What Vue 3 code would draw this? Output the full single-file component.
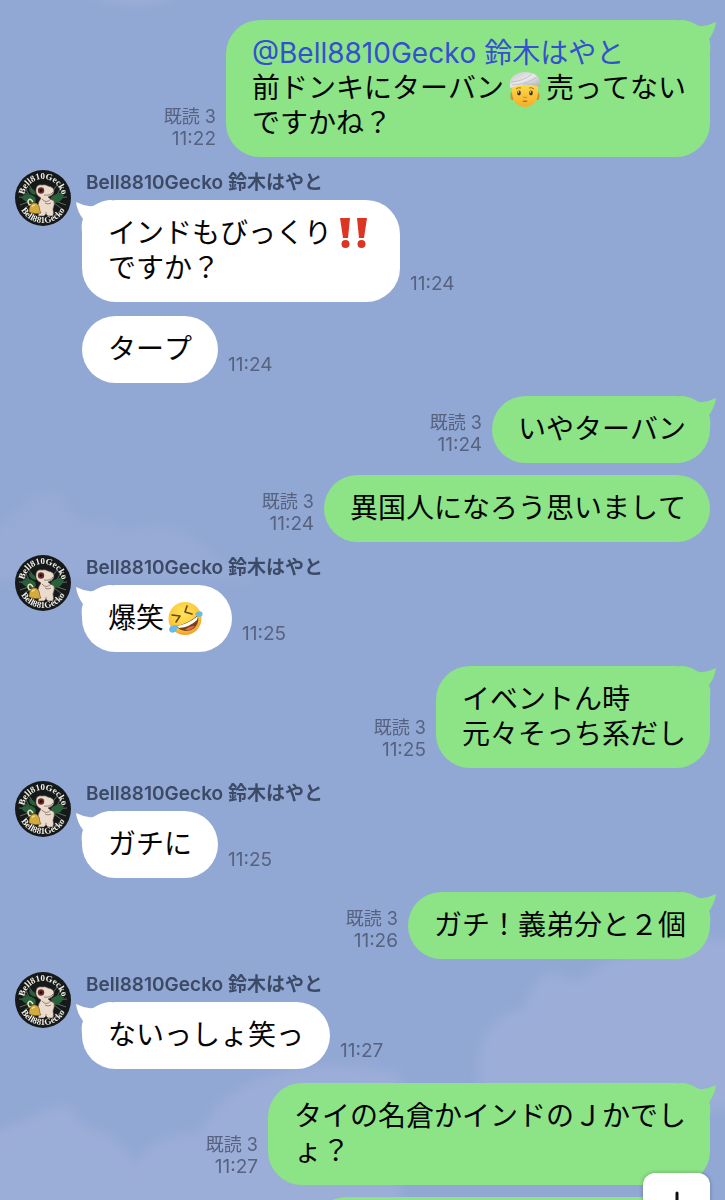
<template>
  <main class="chat">
    <!-- clouds of the wallpaper -->
    <svg class="wallpaper" viewBox="0 0 725 1200" preserveAspectRatio="none" aria-hidden="true">
      <defs>
        <filter id="soft" x="-10%" y="-10%" width="120%" height="120%">
          <feGaussianBlur stdDeviation="6" />
        </filter>
      </defs>
      <g fill="#9fb0da" filter="url(#soft)">
        <path d="M90-10h90q-10 12-45 12T90-10z" />
        <path d="M-20 540Q5 520 20 510q8-16 26-14 12-8 20 4 0 20 28 24 16-14 26 10 50-20 80 10 20 20 60 36H-20z" opacity=".4" />
        <path d="M480 1080q-8-60 45-72 10-38 34-34 16 16 34-4 60-36 150-30v170H480z" opacity=".75" />
        <path d="M-20 1136q30-8 50-18 30-18 42-8 10 20 30 22 26 14 32 34 20-34 66-32 20-46 80-60 50-16 120 0v150H-20z" opacity=".7" />
      </g>
    </svg>

    <ul class="messages">
      <li
        v-for="(msg, index) in messages"
        :key="index"
        class="message"
        :class="[msg.mine ? 'sent' : 'received', { grouped: msg.grouped }]"
      >
        <svg v-if="msg.name" class="avatar" viewBox="0 0 56 56" role="img" aria-label="Bell8810Gecko">
          <defs>
            <path id="arc-top" d="M9 28A19 19 0 0 1 47 28" />
            <path id="arc-bottom" d="M3 28A25 25 0 0 0 53 28" />
          </defs>
          <circle cx="28" cy="28" r="28" fill="#15191a" />
          <path
            d="M5 20l12 7M4 27l12 1M5 35l11-4M9 39l8-6M13 14l7 9M51 20l-12 7M52 27l-12 1M51 35l-11-4M47 39l-8-6M43 14l-7 9M10 17l4 8M46 17l-4 8"
            fill="none"
            stroke="#6d7f6d"
            stroke-width=".8"
          />
          <path d="M6 27q7-6 14 0 2 4-1 6-8 1-13-6zM36 27q7-6 13-2-3 9-12 8zM14 18q7 1 7 7-7-1-7-7z" fill="#28603a" />
          <path
            d="M21 19q1-5 6-4 3-1 6 1 6 1 6 5 0 4-6 6 2 2 6 4 1 3-1 8 1 4 0 7h-5l-2-2-2 2h-6l1-4q-3-7 2-14-6-3-5-9z"
            fill="#eadbcc"
            stroke="#5b4b42"
            stroke-width=".6"
          />
          <circle cx="26" cy="20.500" r="3.200" fill="#682c2b" />
          <circle cx="26" cy="20.500" r="1.300" fill="#150f10" />
          <path d="M29 25q6 1 9-3M27 29q4 5 9 0M30 33q3 2 6 0M31 42v3" fill="none" stroke="#725a4d" stroke-width=".7" />
          <path d="M18 32q-3-5-5-1 0 4 3 4" fill="none" stroke="#eee3c1" stroke-width="1.500" />
          <path d="M15 36q2-4 6-3 4 2 4 8l1 2q-6 2-12-1 0-4 1-6z" fill="#d4ac3e" stroke="#71531c" stroke-width=".6" />
          <path d="M17 37q0-2 3-2" fill="none" stroke="#ffeaa0" />
          <text class="avatar-text">
            <textPath href="#arc-top" startOffset="50%" text-anchor="middle">Bell810Gecko</textPath>
          </text>
          <text class="avatar-text">
            <textPath href="#arc-bottom" startOffset="50%" text-anchor="middle">Bell881Gecko</textPath>
          </text>
        </svg>

        <div class="body">
          <div v-if="msg.name" class="name">{{ msg.name }}</div>
          <div class="line-up">
            <div class="meta">
              <span v-if="msg.mine">既読 3</span>
              <time>{{ msg.time }}</time>
            </div>
            <div class="bubble">
              <svg v-if="!msg.grouped" class="tail" viewBox="0 0 36 36" aria-hidden="true">
                <path d="M0 0H3Q11 1 17 5Q20 7 23 6Q30 5 36 2Q35 11 29 19Q31 24 30 32L16 36Z" />
              </svg>
              <p v-for="(line, i) in msg.lines" :key="i">
                <template v-for="(part, j) in line" :key="j">
                  <a v-if="part.mention" href="#" class="mention">{{ part.mention }}</a>
                  <svg v-else-if="part.emoji === 'turban'" class="emoji" viewBox="0 0 36 36" role="img" aria-label="ターバン">
                    <defs>
                      <linearGradient id="face" x1="0" y1="0" x2="0" y2="1">
                        <stop offset="0" stop-color="#ffd94a" />
                        <stop offset="1" stop-color="#f5ad28" />
                      </linearGradient>
                      <linearGradient id="cloth" x1="0" y1="0" x2="1" y2="1">
                        <stop offset="0" stop-color="#c7c5c9" />
                        <stop offset=".5" stop-color="#e9e8ec" />
                        <stop offset="1" stop-color="#aaa9b2" />
                      </linearGradient>
                    </defs>
                    <ellipse cx="5.500" cy="25" rx="2" ry="4" fill="#d98b28" />
                    <ellipse cx="30.500" cy="25" rx="2" ry="4" fill="#d98b28" />
                    <path d="M5 14h26v8q-1 13-13 14Q6 35 5 22z" fill="url(#face)" />
                    <path d="M3 17Q1 2 18 1q17 1 15 15-7-3-15-2-8 0-15 3z" fill="url(#cloth)" />
                    <path d="M5 14Q20 13 30 6M4 11Q17 10 25 3M16 13q10-1 17 2" fill="none" stroke="#b6b4bc" stroke-width=".7" />
                    <ellipse cx="12" cy="22" rx="1.800" ry="2.400" fill="#49300f" />
                    <ellipse cx="24" cy="22" rx="1.800" ry="2.400" fill="#49300f" />
                    <circle cx="11.500" cy="21" r=".7" fill="#fff" />
                    <circle cx="23.500" cy="21" r=".7" fill="#fff" />
                    <path d="M9 18q2-2 5-1M22 17q3-1 5 1" fill="none" stroke="#a66b18" />
                    <path d="M16 26q2 1 4 0" fill="none" stroke="#d18b1d" />
                    <path d="M15 30q3-1 6 0-3 2-6 0z" fill="#b25a24" />
                  </svg>
                  <svg v-else-if="part.emoji === 'bang'" class="emoji" viewBox="0 0 36 36" role="img" aria-label="‼">
                    <path d="M5 2h10l-2 20H8zM22 2h10l-3 20h-5z" fill="#dd3524" />
                    <circle cx="10.500" cy="28" r="4" fill="#dd3524" />
                    <circle cx="26.500" cy="28" r="4" fill="#dd3524" />
                  </svg>
                  <svg v-else-if="part.emoji === 'rofl'" class="emoji" viewBox="0 0 36 36" role="img" aria-label="爆笑">
                    <defs>
                      <radialGradient id="laugh" cx=".45" cy=".35" r=".65">
                        <stop offset="0" stop-color="#ffe45a" />
                        <stop offset=".7" stop-color="#fcc93a" />
                        <stop offset="1" stop-color="#eda02b" />
                      </radialGradient>
                    </defs>
                    <circle cx="18" cy="17.500" r="16.500" fill="url(#laugh)" />
                    <path
                      d="M5 14l8 1-4 6M20 5l-2 6 7 2"
                      fill="none"
                      stroke="#65451c"
                      stroke-width="1.600"
                      stroke-linecap="round"
                      stroke-linejoin="round"
                    />
                    <path d="M9 25Q21 23 31 14q2 11-7 15-9 3-15-4z" fill="#754319" />
                    <path d="M10 25Q21 23 31 15l-1 4Q23 26 12 27z" fill="#fff" />
                    <path d="M18 29q4-4 10-4-4 5-10 4z" fill="#ed6651" />
                    <path d="M10 24q-8 0-8 5 1 4 6 2 3-2 2-7zM28 13q3-4 7-2 2 4-2 5-3 0-5-3z" fill="#65bce9" />
                  </svg>
                  <template v-else>{{ part }}</template>
                </template>
              </p>
            </div>
          </div>
        </div>
      </li>
      <li class="message sent grouped">
        <div class="bubble upcoming"></div>
      </li>
    </ul>

    <button class="to-latest" type="button" aria-label="最新のメッセージへ">
      <svg viewBox="0 0 40 40" aria-hidden="true">
        <path d="M20 7v28M7 22l13 13 13-13" />
      </svg>
    </button>
  </main>
</template>

<script setup>
import { ref } from 'vue'

const gecko = 'Bell8810Gecko 鈴木はやと'

const messages = ref([
  {
    mine: true,
    time: '11:22',
    lines: [
      [{ mention: '@Bell8810Gecko 鈴木はやと' }],
      ['前ドンキにターバン', { emoji: 'turban' }, '売ってない'],
      ['ですかね？']
    ]
  },
  { name: gecko, time: '11:24', lines: [['インドもびっくり', { emoji: 'bang' }], ['ですか？']] },
  { grouped: true, time: '11:24', lines: [['タープ']] },
  { mine: true, time: '11:24', lines: [['いやターバン']] },
  { mine: true, grouped: true, time: '11:24', lines: [['異国人になろう思いまして']] },
  { name: gecko, time: '11:25', lines: [['爆笑', { emoji: 'rofl' }]] },
  { mine: true, time: '11:25', lines: [['イベントん時'], ['元々そっち系だし']] },
  { name: gecko, time: '11:25', lines: [['ガチに']] },
  { mine: true, time: '11:26', lines: [['ガチ！義弟分と２個']] },
  { name: gecko, time: '11:27', lines: [['ないっしょ笑っ']] },
  { mine: true, time: '11:27', lines: [['タイの名倉かインドのＪかでし'], ['ょ？']] }
])
</script>

<style>
body {
  margin: 0;
  background: #92a8d4;
}
</style>

<style scoped>
.chat {
  position: relative;
  height: 100vh;
  overflow: hidden;
  font-family: Inter, 'Noto Sans CJK JP', sans-serif;
  color: #050505;
}

.wallpaper {
  position: absolute;
  inset: 0;
  width: 100%;
  height: 100%;
}

.messages {
  position: relative;
  margin: 0;
  padding: 20px 15px 0;
  list-style: none;
}

.message {
  display: flex;
  margin-top: 13px;
}

.message:first-child {
  margin-top: 0;
}

.sent.grouped {
  margin-top: 12px;
}

.received.grouped {
  margin-top: 14px;
  padding-left: 67px;
}

.received + .sent {
  margin-top: 14px;
}

.received.grouped + .sent {
  margin-top: 13px;
}

.sent {
  justify-content: flex-end;
}

.avatar {
  width: 56px;
  height: 56px;
  margin-right: 11px;
}

.avatar-text {
  font-family: 'Liberation Serif', serif;
  font-size: 9px;
  font-weight: bold;
  fill: #f2efe4;
}

.name {
  height: 30px;
  padding-left: 4px;
  font-size: 19px;
  line-height: 25px;
  font-weight: 600;
  color: #3c4a66;
}

/* bubble and its time stamp */
.line-up {
  display: flex;
  align-items: flex-end;
  gap: 10px;
}

.received .line-up {
  flex-direction: row-reverse;
  justify-content: flex-end;
}

.meta {
  display: flex;
  flex-direction: column;
  align-items: flex-end;
  padding-bottom: 7px;
  font-size: 18px;
  line-height: 22px;
  white-space: nowrap;
  color: #56627f;
}

.meta time {
  font-size: 19px;
}

.bubble {
  position: relative;
  padding: 16px 24px 16px 26px;
  border-radius: 34px;
  background: #8de486;
  font-size: 28px;
  line-height: 35px;
  font-kerning: none;
}

.received .bubble {
  padding-right: 26px;
  background: #fff;
}

.bubble p {
  display: flex;
  align-items: center;
  height: 35px;
  margin: 0;
  white-space: nowrap;
}

.mention {
  color: #3350d0;
  text-decoration: none;
}

.tail {
  position: absolute;
  top: 0;
  right: -6px;
  width: 36px;
  height: 36px;
  fill: #8de486;
}

.received .tail {
  right: auto;
  left: -6px;
  fill: #fff;
  transform: scaleX(-1);
}

.emoji {
  width: 36px;
  height: 36px;
  margin: 0 3px;
}

.upcoming {
  width: 50%;
  height: 35px;
}

.to-latest {
  position: absolute;
  right: 15px;
  bottom: -40px;
  width: 67px;
  height: 67px;
  padding: 13px;
  border: 0;
  border-radius: 12px;
  background: #fff;
  box-shadow: 0 0 4px rgba(0, 0, 0, 0.3);
}

.to-latest svg {
  width: 40px;
  height: 40px;
  fill: none;
  stroke: #111;
  stroke-width: 3;
  stroke-linecap: round;
}
</style>
